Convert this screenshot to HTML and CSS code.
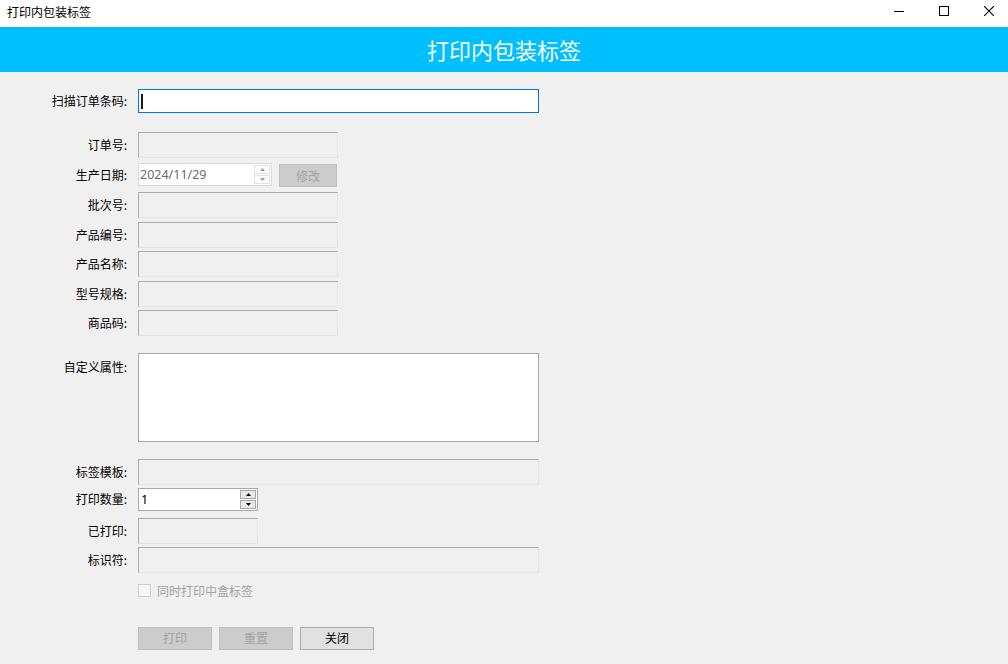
FILE: index.html
```html
<!DOCTYPE html>
<html lang="zh-CN">
<head>
<meta charset="utf-8">
<title>打印内包装标签</title>
<link rel="stylesheet" href="styles.css">
</head>
<body>
<div class="titlebar">
  <span class="app-title">打印内包装标签</span>
  <div class="win-controls">
    <span class="win-btn">
      <svg width="10" height="10" viewBox="0 0 10 10"><path d="M0 5.5H10" stroke="#000" stroke-width="1"/></svg>
    </span>
    <span class="win-btn">
      <svg width="10" height="10" viewBox="0 0 10 10"><rect x="0.5" y="0.5" width="9" height="9" fill="none" stroke="#000" stroke-width="1"/></svg>
    </span>
    <span class="win-btn">
      <svg width="10" height="10" viewBox="0 0 10 10"><path d="M0 0L10 10M10 0L0 10" stroke="#000" stroke-width="1.1"/></svg>
    </span>
  </div>
</div>

<header class="banner">打印内包装标签</header>

<main class="form">
  <div class="row row-scan">
    <label class="label">扫描订单条码:</label>
    <div class="field field-lg field-focus"><span class="caret"></span></div>
  </div>

  <div class="row row-order">
    <label class="label">订单号:</label>
    <div class="field field-md field-off"></div>
  </div>

  <div class="row row-date">
    <label class="label">生产日期:</label>
    <div class="date-picker">
      <span class="date-text">2024/11/29</span>
      <span class="spin spin-light">
        <span class="spin-part"><svg width="5" height="3" viewBox="0 0 5 3"><path d="M2.5 0L5 3H0Z" fill="#9a9a9a"/></svg></span>
        <span class="spin-part"><svg width="5" height="3" viewBox="0 0 5 3"><path d="M0 0H5L2.5 3Z" fill="#9a9a9a"/></svg></span>
      </span>
    </div>
    <button class="btn btn-off btn-edit">修改</button>
  </div>

  <div class="row row-std row-first">
    <label class="label">批次号:</label>
    <div class="field field-md field-off"></div>
  </div>
  <div class="row row-std">
    <label class="label">产品编号:</label>
    <div class="field field-md field-off"></div>
  </div>
  <div class="row row-std">
    <label class="label">产品名称:</label>
    <div class="field field-md field-off"></div>
  </div>
  <div class="row row-std">
    <label class="label">型号规格:</label>
    <div class="field field-md field-off"></div>
  </div>
  <div class="row row-std">
    <label class="label">商品码:</label>
    <div class="field field-md field-off"></div>
  </div>

  <div class="row row-attr">
    <label class="label label-top">自定义属性:</label>
    <div class="textarea"></div>
  </div>

  <div class="row row-tpl">
    <label class="label">标签模板:</label>
    <div class="field field-lg field-off"></div>
  </div>

  <div class="row row-qty">
    <label class="label">打印数量:</label>
    <div class="num-box">
      <span class="num-text">1</span>
      <span class="spin spin-dark">
        <span class="spin-part"><svg width="5" height="3" viewBox="0 0 5 3"><path d="M2.5 0L5 3H0Z" fill="#000"/></svg></span>
        <span class="spin-part"><svg width="5" height="3" viewBox="0 0 5 3"><path d="M0 0H5L2.5 3Z" fill="#000"/></svg></span>
      </span>
    </div>
  </div>

  <div class="row row-printed">
    <label class="label">已打印:</label>
    <div class="field field-sm field-off"></div>
  </div>

  <div class="row row-id">
    <label class="label">标识符:</label>
    <div class="field field-lg field-off"></div>
  </div>

  <div class="row row-check">
    <span class="label"></span>
    <span class="checkbox"></span>
    <span class="check-text">同时打印中盒标签</span>
  </div>

  <div class="row row-actions">
    <span class="label"></span>
    <div class="actions">
      <button class="btn btn-off">打印</button>
      <button class="btn btn-off">重置</button>
      <button class="btn btn-on">关闭</button>
    </div>
  </div>
</main>
</body>
</html>
```

FILE: styles.css
```css
* {
  box-sizing: border-box;
}

html, body {
  margin: 0;
  padding: 0;
}

body {
  width: 1008px;
  height: 664px;
  overflow: hidden;
  background: #f0f0f0;
  font-family: "Noto Sans CJK SC", "Noto Sans", sans-serif;
  font-size: 12px;
  color: #000;
}

/* window title bar */
.titlebar {
  height: 27px;
  background: #fff;
  display: flex;
  align-items: center;
  justify-content: space-between;
}

.app-title {
  padding-left: 7px;
  font-size: 12px;
  line-height: 1;
  margin-top: -4px;
}

.win-controls {
  display: flex;
  align-self: stretch;
  margin-right: -3px;
}

.win-btn {
  width: 45px;
  display: flex;
  align-items: flex-start;
  justify-content: center;
  padding-top: 6px;
}

/* blue heading strip */
.banner {
  height: 45px;
  background: #00bfff;
  color: #fff;
  font-size: 22px;
  display: flex;
  align-items: center;
  justify-content: center;
  line-height: 1;
  padding-bottom: 1px;
}

/* form body */
.form {
  padding-top: 17px;
}

.row {
  display: flex;
  align-items: center;
}

.label {
  flex: none;
  width: 127px;
  margin-right: 11px;
  text-align: right;
  line-height: 1;
  color: #000;
}

.label-top {
  align-self: flex-start;
  padding-top: 8px;
}

.field {
  height: 26px;
  flex: none;
}

.field-lg { width: 401px; }
.field-md { width: 200px; }
.field-sm { width: 120px; }

.field-off {
  background: #f0f0f0;
  border: 1px solid;
  border-color: #acacac #e4e4e4 #e4e4e4 #acacac;
}

.field-focus {
  height: 24px;
  background: #fff;
  border: 1px solid #0078d7;
  display: flex;
  align-items: center;
  padding-left: 2px;
}

.caret {
  width: 2px;
  height: 15px;
  background: #1a1a1a;
}

/* row spacing */
.row-scan { height: 24px; }
.row-order { margin-top: 19px; height: 26px; }
.row-date { margin-top: 5px; height: 24px; align-items: stretch; }
.row-std { margin-top: 3.6px; height: 26px; }
.row-std.row-first { margin-top: 5px; }
.row-attr { margin-top: 16.6px; height: 89px; align-items: stretch; }
.row-tpl { margin-top: 17px; height: 26px; }
.row-qty { margin-top: 3px; height: 23px; }
.row-printed { margin-top: 7px; height: 26px; }
.row-id { margin-top: 3px; height: 26px; }
.row-check { margin-top: 12px; height: 12px; }
.row-actions { margin-top: 30px; height: 23px; }

.row-date .label {
  align-self: center;
}

/* date picker */
.date-picker {
  width: 134px;
  height: 23px;
  align-self: flex-start;
  background: #fff;
  border: 1px solid #dadada;
  display: flex;
  align-items: center;
  justify-content: space-between;
  padding: 0 1px 0 1px;
}

.date-text {
  color: #6d6d6d;
  font-family: "Noto Sans", "Noto Sans CJK SC", sans-serif;
  font-size: 12.5px;
}

.spin {
  display: flex;
  flex-direction: column;
  gap: 1px;
  width: 16px;
}

.spin-part {
  height: 9px;
  display: flex;
  align-items: center;
  justify-content: center;
}

.spin-light .spin-part {
  border: 1px solid #e2e2e2;
  background: #fdfdfd;
}

.spin-dark .spin-part {
  border: 1px solid #a8a8a8;
  background: #e8e8e8;
}

/* buttons */
.btn {
  width: 74px;
  height: 23px;
  font-family: inherit;
  font-size: 12px;
  padding: 0;
  line-height: 1;
}

.btn-off {
  background: #cccccc;
  border: 1px solid #bfbfbf;
  color: #a3a3a3;
}

.btn-on {
  background: #e1e1e1;
  border: 1px solid #adadad;
  color: #000;
}

.btn-edit {
  width: 58px;
  margin-left: 7px;
  align-self: flex-end;
}

/* multi-line attributes */
.textarea {
  width: 401px;
  background: #fff;
  border: 1px solid #a8a8a8;
}

/* quantity spinner */
.num-box {
  width: 120px;
  height: 23px;
  background: #fff;
  border: 1px solid #a8a8a8;
  display: flex;
  align-items: center;
  justify-content: space-between;
  padding: 0 1px 0 2px;
}

.num-text {
  font-family: "Noto Sans", sans-serif;
  font-size: 12.5px;
}

/* checkbox */
.checkbox {
  width: 13px;
  height: 13px;
  border: 1px solid #cfcfcf;
  background: #f6f6f6;
  flex: none;
}

.check-text {
  margin-left: 6px;
  color: #a3a3a3;
  line-height: 1;
}

.actions {
  display: flex;
  gap: 7px;
}
```
